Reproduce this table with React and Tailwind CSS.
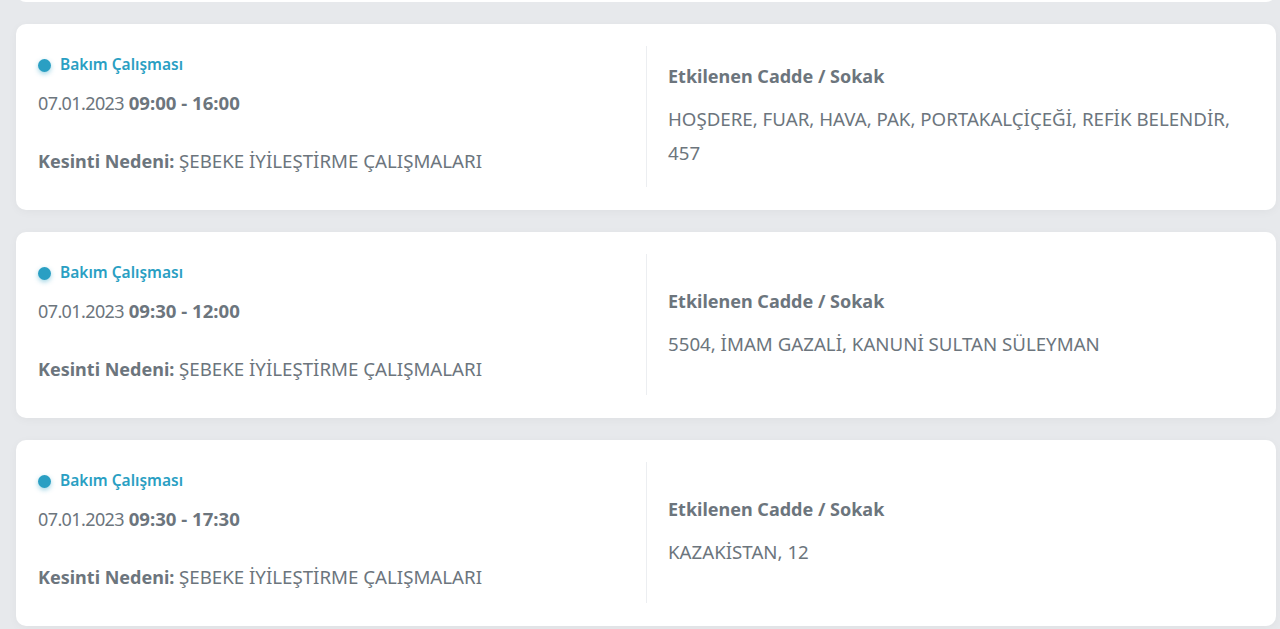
import React from 'react';

const items = [
  {
    date: '07.01.2023',
    time: '09:00 - 16:00',
    streets: 'HOŞDERE, FUAR, HAVA, PAK, PORTAKALÇİÇEĞİ, REFİK BELENDİR, 457'
  },
  {
    date: '07.01.2023',
    time: '09:30 - 12:00',
    streets: '5504, İMAM GAZALİ, KANUNİ SULTAN SÜLEYMAN'
  },
  {
    date: '07.01.2023',
    time: '09:30 - 17:30',
    streets: 'KAZAKİSTAN, 12'
  }
];

function OutageCard({ item }) {
  return (
    <div className="bg-white rounded-[10px] shadow-[0_2px_10px_rgba(0,0,0,0.04)] px-[22px] pt-[22px] pb-[23px] grid grid-cols-2 min-h-[186px]">
      {/* Sol: tür, tarih, neden */}
      <div className="pt-[9px] h-[141px]">
        <div className="flex items-center h-5 gap-[9px]">
          <span className="w-[13px] h-[13px] rounded-full bg-[#2a9fc3] shadow-[0_2px_5px_rgba(42,159,195,0.45)]" />
          <span className="text-[15.5px] font-semibold text-[#2a9fc3]">Bakım Çalışması</span>
        </div>
        <div className="mt-4 text-[18px] leading-6 text-[#6c757d]">
          <span className="tracking-[-0.6px]">{item.date}</span>{' '}
          <span className="font-bold text-[18.6px]">{item.time}</span>
        </div>
        <div className="mt-[34px] text-[18px] leading-6 text-[#6c757d]">
          <span className="font-bold">Kesinti Nedeni:</span>{' '}
          <span className="text-[18.7px]">ŞEBEKE İYİLEŞTİRME ÇALIŞMALARI</span>
        </div>
      </div>

      {/* Sağ: etkilenen sokaklar */}
      <div className="border-l border-[#eceef1] pl-[21px] flex flex-col justify-center h-[141px]">
        <div className="text-[18px] leading-6 font-bold text-[#6c757d]">Etkilenen Cadde / Sokak</div>
        <div className="mt-[14px] text-[18.7px] leading-[34px] text-[#6c757d] pr-4">{item.streets}</div>
      </div>
    </div>
  );
}

export default function App() {
  return (
    <div
      className="h-[629px] overflow-hidden bg-[#e7e9ec] pl-4 pr-1"
      style={{ fontFamily: '"Noto Sans", "Open Sans", sans-serif' }}
    >
      <div className="-mt-[184px] flex flex-col gap-[22px]">
        <div className="bg-white rounded-[10px] h-[186px]" />
        {items.map((it, i) => (
          <OutageCard key={i} item={it} />
        ))}
      </div>
    </div>
  );
}
